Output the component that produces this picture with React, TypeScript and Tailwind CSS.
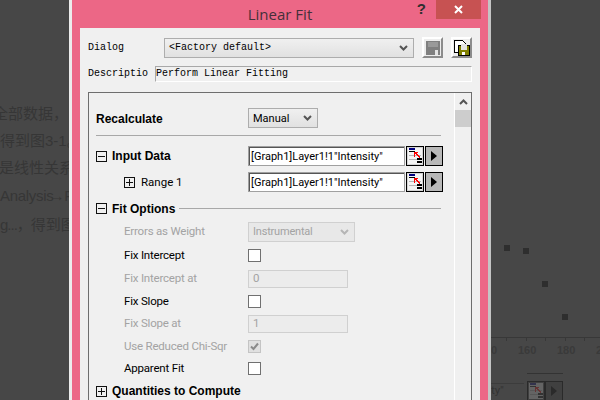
import React from "react";

const ui = "font-['Roboto',sans-serif]";
const bold = "font-['Liberation_Sans',sans-serif] text-[12px] leading-none font-bold text-black";
const mono = "font-['Liberation_Mono',monospace]";

const Toggle = ({ open }: { open?: boolean }) => (
  <svg width="11" height="11" viewBox="0 0 11 11" shapeRendering="crispEdges" className="shrink-0">
    <rect x="0.5" y="0.5" width="10" height="10" fill="none" stroke="#111" />
    <path d="M2 5.5h7" stroke="#111" />
    {open ? <path d="M5.5 2v7" stroke="#111" /> : null}
  </svg>
);

const Chevron = ({ color = "#555" }: { color?: string }) => (
  <svg width="9" height="6" viewBox="0 0 9 6" className="shrink-0">
    <path d="M1 1l3.5 3.5L8 1" fill="none" stroke={color} strokeWidth="2" />
  </svg>
);

const TableIcon = ({ dim }: { dim?: boolean }) => (
  <svg width="14" height="16" viewBox="0 0 14 16" shapeRendering="crispEdges" className={dim ? "opacity-20" : ""}>
    <rect width="14" height="16" fill="#f4f4f4" />
    <rect x="1" y="0" width="6" height="2" fill="#000080" />
    <path d="M1 3.5h6" stroke="#000" />
    <path d="M1 7.5h12M1 11.5h12" stroke="#b5b5b5" />
    <rect x="9" y="10" width="5" height="2" fill="#000" />
    <rect x="9" y="13" width="5" height="2" fill="#000" />
    <path d="M6 4h4v1h-2l4 4-1 1-4-4v3H6z" fill="#f00" />
  </svg>
);

const RefInput = ({ value }: { value: string }) => (
  <div className="flex h-5 items-stretch gap-px">
    <div className="w-[157px] border border-[#a0a0a0] bg-white">
      <div className="flex h-full items-center border-t border-l border-[#555] pl-px text-[11px] leading-none text-black">
        {value}
      </div>
    </div>
    <div className="flex w-[18px] items-center justify-center border border-black bg-[#d4d4d4]">
      <TableIcon />
    </div>
    <div className="flex w-[18px] items-center justify-center border border-black bg-[#b8b8b8]">
      <div className="h-0 w-0 border-y-[5px] border-l-[6px] border-y-transparent border-l-black" />
    </div>
  </div>
);

const Check = ({ checked }: { checked?: boolean }) => (
  <div className={`flex h-[13px] w-[13px] items-center justify-center border ${checked ? "border-[#c4c4c4] bg-[#e0e0e0]" : "border-[#707070] bg-white"}`}>
    {checked ? (
      <svg width="9" height="9" viewBox="0 0 9 9">
        <path d="M1 4.5l2.5 2.5L8 1.5" fill="none" stroke="#8a8a8a" strokeWidth="2" />
      </svg>
    ) : null}
  </div>
);

const Row = ({ label, dim, nudge, height, children }: { label: string; dim?: boolean; nudge?: boolean; height: string; children?: React.ReactNode }) => (
  <div className={`flex items-center pl-[35px] ${height}`}>
    <div className={`w-[124px] text-[11.5px] leading-none tracking-[-0.2px] ${nudge ? "pt-0.5" : ""} ${dim ? "text-[#a3a3a3]" : "text-black"}`}>{label}</div>
    {children}
  </div>
);

const Section = ({ label, open, height, line, nudge }: { label: string; open?: boolean; height: string; line?: boolean; nudge?: boolean }) => (
  <div className={`flex items-center pl-[7px] pr-[13px] ${height}`}>
    <Toggle open={open} />
    <div className={`ml-[5px] ${bold} ${nudge ? "pt-px" : ""}`}>{label}</div>
    {line ? <div className="ml-1 h-px flex-1 bg-[#a8a8a8]" /> : null}
  </div>
);

const DisabledField = ({ value }: { value: string }) => (
  <div className="flex h-[18px] w-[100px] items-center border border-[#d0d0d0] bg-[#ececec] pl-1 text-[11.5px] leading-none text-[#a3a3a3]">
    {value}
  </div>
);

const SaveButton = ({ children }: { children: React.ReactNode }) => (
  <div className="flex h-[21px] w-[21px] items-center justify-center border-2 border-t-white border-l-white border-r-[#8c8c8c] border-b-[#8c8c8c] bg-[#ededed]">
    {children}
  </div>
);

const Background = () => (
  <div className="absolute inset-0 overflow-hidden bg-[#474747] font-['Liberation_Sans','Noto_Sans_CJK_SC',sans-serif] text-[15px] text-[#363636]">
    <div className="absolute top-[103px] left-[-7px] whitespace-nowrap">全部数据，</div>
    <div className="absolute top-[130px] left-0 whitespace-nowrap">得到图3-1。</div>
    <div className="absolute top-[157px] left-[-1px] whitespace-nowrap">是线性关系</div>
    <div className="absolute top-[185px] left-0 whitespace-nowrap tracking-[-0.3px]">
      Analysis<span className="-ml-1">→</span>Fit
    </div>
    <div className="absolute top-[214px] left-0 whitespace-nowrap">
      <span className="tracking-[-1px]">g...，</span>得到图
    </div>
    <div className="absolute top-[245px] left-[504px] h-[6px] w-[6px] bg-[#2e2e2e]" />
    <div className="absolute top-[248px] left-[523px] h-[6px] w-[6px] bg-[#2e2e2e]" />
    <div className="absolute top-[281px] left-[542px] h-[6px] w-[6px] bg-[#2e2e2e]" />
    <div className="absolute top-[314px] left-[562px] h-[6px] w-[6px] bg-[#2e2e2e]" />
    <div className="absolute top-[337px] left-[491px] h-px w-[109px] bg-[#383838]" />
    {[506, 526, 545, 565, 584].map((x) => (
      <div key={x} className="absolute top-[338px] h-[3px] w-px bg-[#383838]" style={{ left: x }} />
    ))}
    <div className="absolute top-[345px] left-[491px] text-[11px] leading-none font-bold text-[#3a3a3a]">0</div>
    <div className="absolute top-[345px] left-[518px] text-[11px] leading-none font-bold text-[#3a3a3a]">160</div>
    <div className="absolute top-[345px] left-[557px] text-[11px] leading-none font-bold text-[#3a3a3a]">180</div>
    <div className="absolute top-[345px] left-[596px] text-[11px] leading-none font-bold text-[#3a3a3a]">2</div>
    <div className="absolute top-[373px] left-[527px] h-px w-[36px] bg-[#333333]" />
    <div className="absolute top-[383px] left-[491px] h-px w-[33px] bg-[#3c3c3c]" />
    <div className="absolute top-[385px] left-[491px] font-['Roboto',sans-serif] text-[11.5px] leading-none text-[#333333]">ty''</div>
    <div className="absolute top-[381px] left-[527px] flex h-[20px] w-[18px] items-center justify-center border border-[#2a2a2a] bg-[#404040]">
      <TableIcon dim />
    </div>
    <div className="absolute top-[381px] left-[545px] flex h-[20px] w-[18px] items-center justify-center border border-[#2a2a2a] bg-[#404040]">
      <div className="h-0 w-0 border-y-[5px] border-l-[6px] border-y-transparent border-l-[#2a2a2a]" />
    </div>
  </div>
);

const App = () => {
  return (
    <div className={`relative h-[400px] w-[600px] overflow-hidden ${ui}`}>
      <Background />

      {/* dialog window */}
      <div className="absolute top-0 left-[69px] flex h-[400px] w-[422px] flex-col border-r-[3px] border-l-[3px] border-r-[#c4c4c4] border-l-[#ececec] bg-[#ec6786]">
        <div className="relative flex h-7 shrink-0 items-center justify-center font-['Open_Sans',sans-serif] text-[15px] leading-none text-[#44303a]">
          Linear Fit
          <div className="absolute top-0 right-[7px] flex h-[19px] items-start">
            <div className="mr-[10px] font-['Liberation_Sans',sans-serif] text-[15px] leading-[17px] font-bold text-[#2f2f2f]">?</div>
            <div className="flex h-[19px] w-[45px] items-center justify-center bg-[#c75252]">
              <svg width="9" height="9" viewBox="0 0 9 9">
                <path d="M1 1l7 7M8 1l-7 7" stroke="#fff" strokeWidth="2" />
              </svg>
            </div>
          </div>
        </div>

        <div className="mx-2 flex flex-1 flex-col bg-[#f0f0f0] px-2 pt-[9px]">
          <div className="flex h-[21px] items-center">
            <div className={`w-[76px] text-[10px] leading-none text-black ${mono}`}>Dialog</div>
            <div className={`flex h-5 w-[250px] items-center justify-between border border-[#adadad] bg-gradient-to-b from-[#f0f0f0] to-[#e1e1e1] pr-[5px] pl-[4px] text-[10px] leading-none text-black ${mono}`}>
              &lt;Factory default&gt;
              <Chevron />
            </div>
            <div className="ml-2">
              <SaveButton>
                <svg width="14" height="14" viewBox="0 0 14 14" shapeRendering="crispEdges">
                  <rect width="14" height="14" fill="#808080" />
                  <rect x="2" y="1" width="10" height="5" fill="#9a9a9a" />
                  <rect x="9" y="9" width="3" height="5" fill="#e4e4e4" />
                </svg>
              </SaveButton>
            </div>
            <div className="ml-2">
              <SaveButton>
                <svg width="16" height="16" viewBox="0 0 16 16" shapeRendering="crispEdges">
                  <path d="M0.5 0.5h8l3 3v9h-11z" fill="#fff" stroke="#000" />
                  <rect x="5" y="6" width="11" height="10" fill="#808000" />
                  <path d="M4.5 5.5h11v10h-11z" fill="none" stroke="#000" />
                  <rect x="7" y="4" width="6" height="6" fill="#e4e4e4" />
                  <rect x="8" y="12" width="3" height="3" fill="#fff" />
                </svg>
              </SaveButton>
            </div>
          </div>

          <div className="mt-2 flex h-4 items-center">
            <div className={`w-[67px] text-[10px] leading-none text-black ${mono}`}>Descriptio</div>
            <div className={`flex h-4 flex-1 items-center border border-t-[#a8a8a8] border-r-white border-b-white border-l-[#a8a8a8] text-[10px] leading-none text-black ${mono}`}>
              Perform Linear Fitting
            </div>
          </div>

          <div className="mt-2.5 flex flex-1 overflow-hidden border-t border-r border-l border-[#6e6e6e]">
            <div className="flex-1">
              <div className="mt-3 flex h-[26px] items-center pl-[7px]">
                <div className={`w-[152px] pt-px ${bold}`}>Recalculate</div>
                <div className="flex h-5 w-[70px] items-center justify-between border border-[#adadad] bg-gradient-to-b from-[#f0f0f0] to-[#e1e1e1] pr-[5px] pl-1 text-[11px] leading-none text-black">
                  Manual
                  <Chevron />
                </div>
              </div>
              <div className="mt-1 mr-[13px] ml-[7px] h-px bg-[#a8a8a8]" />
              <div className="mt-[7px] flex h-[26px] items-center pl-[7px]">
                <Toggle />
                <div className={`ml-[5px] w-[136px] ${bold}`}>Input Data</div>
                <RefInput value={'[Graph1]Layer1!1"Intensity"'} />
              </div>
              <div className="flex h-[26px] items-center pl-[35px]">
                <Toggle open />
                <div className="ml-[6px] w-[107px] pt-px text-[11.5px] leading-none text-black">Range 1</div>
                <RefInput value={'[Graph1]Layer1!1"Intensity"'} />
              </div>
              <div className="mt-0.5">
                <Section label="Fit Options" height="h-[22px]" line nudge />
              </div>
              <Row label="Errors as Weight" dim height="mt-px h-[23px]">
                <div className="flex h-5 w-[107px] items-center justify-between border border-[#d0d0d0] bg-[#e8e8e8] pr-[5px] pl-1 text-[11px] leading-none tracking-[-0.2px] text-[#a3a3a3]">
                  Instrumental
                  <Chevron color="#b5b5b5" />
                </div>
              </Row>
              <Row label="Fix Intercept" nudge height="h-6"><Check /></Row>
              <Row label="Fix Intercept at" dim height="h-[23px]"><DisabledField value="0" /></Row>
              <Row label="Fix Slope" nudge height="h-[22px]"><Check /></Row>
              <Row label="Fix Slope at" dim height="h-[23px]"><DisabledField value="1" /></Row>
              <Row label="Use Reduced Chi-Sqr" dim nudge height="h-[22px]"><Check checked /></Row>
              <Row label="Apparent Fit" height="h-[23px]"><Check /></Row>
              <Section label="Quantities to Compute" open height="h-[22px]" />
            </div>

            {/* scrollbar */}
            <div className="w-[17px] border-l border-white bg-[#f0f0f0]">
              <div className="flex h-[17px] items-center justify-center">
                <svg width="9" height="6" viewBox="0 0 9 6">
                  <path d="M1 5l3.5-3.5L8 5" fill="none" stroke="#555" strokeWidth="2" />
                </svg>
              </div>
              <div className="h-[17px] bg-[#cdcdcd]" />
            </div>
          </div>
        </div>
      </div>
    </div>
  );
};

export default App;
